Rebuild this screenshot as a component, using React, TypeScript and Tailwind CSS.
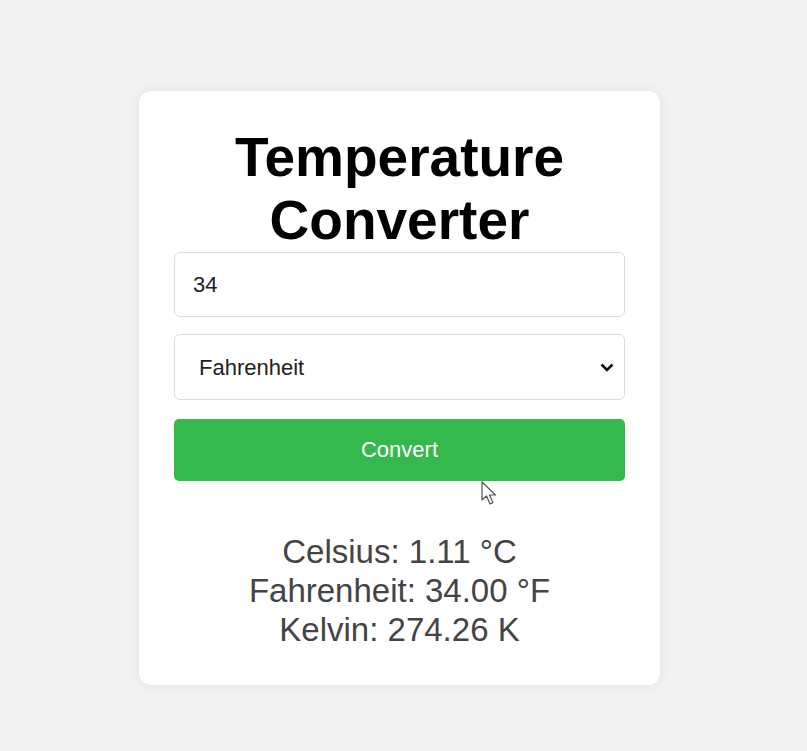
import { useState } from "react";

export default function App() {
  const [value, setValue] = useState("34");
  const [unit, setUnit] = useState("fahrenheit");

  const f = parseFloat(value) || 0;
  const c = unit === "celsius" ? f : unit === "fahrenheit" ? ((f - 32) * 5) / 9 : f - 273.15;
  const results = [
    `Celsius: ${c.toFixed(2)} °C`,
    `Fahrenheit: ${((c * 9) / 5 + 32).toFixed(2)} °F`,
    `Kelvin: ${(c + 273.15).toFixed(2)} K`,
  ];

  return (
    <div
      className="min-h-screen bg-[#f3f3f3] flex pl-[139px] pt-[91px]"
      style={{ fontFamily: '"Liberation Sans", Arial, sans-serif' }}
    >
      <div className="relative w-[521px] h-[594px] bg-white rounded-[12px] shadow-[0_0_14px_rgba(0,0,0,0.08)] px-[35px] pt-[35px]">
        <h1 className="text-[55px] leading-[63px] font-bold text-black text-center">
          Temperature
          <br />
          Converter
        </h1>

        <input
          value={value}
          onChange={(e) => setValue(e.target.value)}
          className="block w-full h-[65px] border border-[#dcdcdc] rounded-[6px] px-[18px] text-[22px] text-[#222] outline-none"
        />

        <div className="relative mt-[17px]">
          <select
            value={unit}
            onChange={(e) => setUnit(e.target.value)}
            className="block w-full h-[66px] appearance-none border border-[#dcdcdc] rounded-[6px] pl-[24px] text-[22px] text-[#222] bg-white outline-none"
          >
            <option value="celsius">Celsius</option>
            <option value="fahrenheit">Fahrenheit</option>
            <option value="kelvin">Kelvin</option>
          </select>
          <svg
            className="absolute right-[11px] top-[29px] pointer-events-none"
            width="14"
            height="9"
            viewBox="0 0 14 9"
          >
            <path d="M1.5 1.5 L7 7 L12.5 1.5" fill="none" stroke="#111" strokeWidth="2.6" />
          </svg>
        </div>

        <button className="mt-[19px] block w-full h-[62px] rounded-[5px] bg-[#35b94d] text-white text-[22px] leading-[58px]">
          Convert
        </button>

        <div className="mt-[51px] text-center text-[33px] leading-[39px] text-[#444]">
          {results.map((r) => (
            <div key={r}>{r}</div>
          ))}
        </div>

        <svg
          className="absolute left-[342px] top-[390px] pointer-events-none"
          width="18"
          height="26"
          viewBox="0 0 18 26"
        >
          <path
            d="M1 1 L1 19 L5.5 15 L9 23 L12 21.7 L8.5 14 L14.5 14 Z"
            fill="#fff"
            stroke="#555"
            strokeWidth="1.2"
            strokeLinejoin="round"
          />
        </svg>
      </div>
    </div>
  );
}
